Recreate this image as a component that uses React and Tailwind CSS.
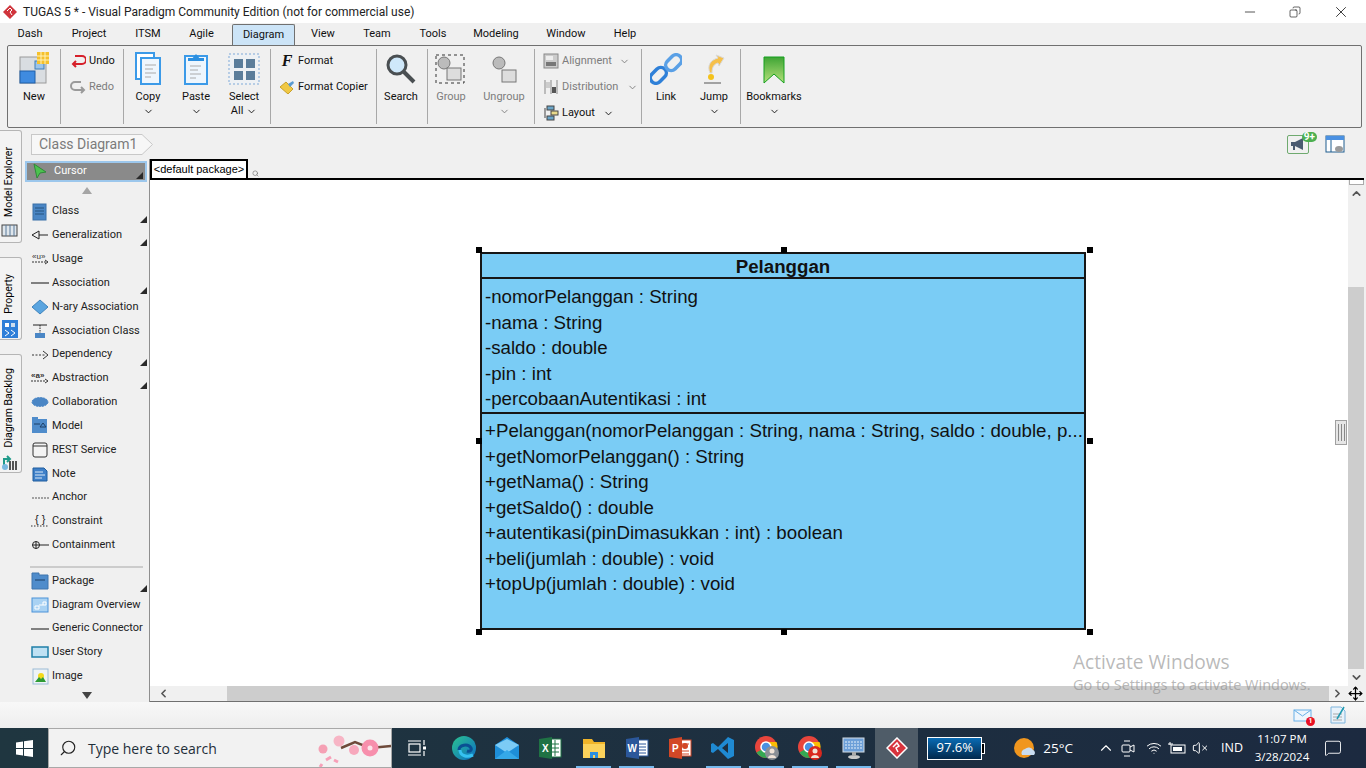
import React from "react";
import { ChevronDown, ChevronUp, ChevronLeft, ChevronRight, Move, Search, Minus, X, Copy, MessageSquare, Wifi, VolumeX } from "lucide-react";

const tabs = [
  ["Dash", "w-[46px]"],
  ["Project", "w-[72px]"],
  ["ITSM", "w-[46px]"],
  ["Agile", "w-[61px]"],
  ["Diagram", "w-[63px]"],
  ["View", "w-[56px]"],
  ["Team", "w-[52px]"],
  ["Tools", "w-[60px]"],
  ["Modeling", "w-[66px]"],
  ["Window", "w-[74px]"],
  ["Help", "w-[44px]"],
];

const paletteTop = [
  ["Class", true],
  ["Generalization", true],
  ["Usage", false],
  ["Association", true],
  ["N-ary Association", false],
  ["Association Class", false],
  ["Dependency", true],
  ["Abstraction", true],
  ["Collaboration", false],
  ["Model", false],
  ["REST Service", false],
  ["Note", false],
  ["Anchor", false],
  ["Constraint", false],
  ["Containment", false],
];

const paletteBottom = [
  ["Package", true],
  ["Diagram Overview", false],
  ["Generic Connector", false],
  ["User Story", false],
  ["Image", false],
];

const attributes = [
  "-nomorPelanggan : String",
  "-nama : String",
  "-saldo : double",
  "-pin : int",
  "-percobaanAutentikasi : int",
];

const operations = [
  "+Pelanggan(nomorPelanggan : String, nama : String, saldo : double, p...",
  "+getNomorPelanggan() : String",
  "+getNama() : String",
  "+getSaldo() : double",
  "+autentikasi(pinDimasukkan : int) : boolean",
  "+beli(jumlah : double) : void",
  "+topUp(jumlah : double) : void",
];

const Svg = ({ w = 20, h = 20, children }) => (
  <svg width={w} height={h} viewBox={`0 0 ${w} ${h}`} className="shrink-0">
    {children}
  </svg>
);

const PaletteIcon = ({ name }) => {
  switch (name) {
    case "Class":
      return (
        <Svg>
          <rect x="3" y="2" width="13" height="16" fill="#4a86c5" stroke="#3b70a8" />
          <path d="M5 6h9M5 9h9M5 12h9" stroke="#24527f" />
        </Svg>
      );
    case "Generalization":
      return (
        <Svg>
          <path d="M9 6l-7 4 7 4zM9 10h9" fill="none" stroke="#222" />
        </Svg>
      );
    case "Usage":
      return (
        <Svg>
          <text x="2" y="10" fontSize="8" fontFamily="Liberation Sans" fill="#333">«u»</text>
          <path d="M2 13h14" stroke="#333" strokeDasharray="2 1" />
          <path d="M15 11l3 2-3 2" fill="none" stroke="#333" />
        </Svg>
      );
    case "Association":
    case "Generic Connector":
      return (
        <Svg>
          <path d="M1 10h18" stroke="#808080" strokeWidth="2" />
        </Svg>
      );
    case "N-ary Association":
      return (
        <Svg>
          <path d="M10 3l8 7-8 7-8-7z" fill="#5aa5e0" stroke="#3f84bd" />
        </Svg>
      );
    case "Association Class":
      return (
        <Svg>
          <path d="M3 4h14" stroke="#222" />
          <path d="M10 4v8" stroke="#222" strokeDasharray="1.5 1" />
          <rect x="5" y="12" width="10" height="5" fill="#4a86c5" />
        </Svg>
      );
    case "Dependency":
      return (
        <Svg>
          <path d="M2 10h13" stroke="#333" strokeDasharray="2 1.5" />
          <path d="M13 6l5 4-5 4" fill="none" stroke="#333" />
        </Svg>
      );
    case "Abstraction":
      return (
        <Svg>
          <text x="1" y="10" fontSize="8" fontWeight="700" fontFamily="Liberation Sans" fill="#333">«a»</text>
          <path d="M1 13h15" stroke="#333" strokeDasharray="2 1" />
          <path d="M15 11l3 2-3 2" fill="none" stroke="#333" />
        </Svg>
      );
    case "Collaboration":
      return (
        <Svg>
          <ellipse cx="10" cy="10" rx="8" ry="4.5" fill="#4a86c5" stroke="#4a86c5" strokeDasharray="2 1" />
        </Svg>
      );
    case "Model":
      return (
        <Svg>
          <path d="M2 1h6v2h9v14H2z" fill="#4f8ccb" />
          <path d="M4 8h6" stroke="#1c3f66" />
          <path d="M13 7l-3 4h6z" fill="none" stroke="#1c3f66" />
        </Svg>
      );
    case "REST Service":
      return (
        <Svg>
          <rect x="3" y="3" width="14" height="14" rx="2" fill="#f4f4f4" stroke="#333" />
          <path d="M3 6h14" stroke="#333" />
        </Svg>
      );
    case "Note":
      return (
        <Svg>
          <path d="M3 4h11l3 3v10H3z" fill="#3f80c8" stroke="#1f5d9e" />
          <path d="M5 8h8M5 11h10M5 14h7" stroke="#dbe9f7" />
        </Svg>
      );
    case "Anchor":
      return (
        <Svg>
          <path d="M2 10h17" stroke="#555" strokeDasharray="2 1" />
        </Svg>
      );
    case "Constraint":
      return (
        <Svg>
          <text x="5" y="12" fontSize="11" fontFamily="Liberation Sans" fill="#222">{"{ }"}</text>
          <path d="M1 15h18" stroke="#333" strokeDasharray="1.5 1.5" />
        </Svg>
      );
    case "Containment":
      return (
        <Svg>
          <circle cx="6" cy="10" r="3.5" fill="none" stroke="#222" />
          <path d="M2.5 10H19M6 6.5v7" stroke="#222" />
        </Svg>
      );
    case "Package":
      return (
        <Svg>
          <path d="M2 2h7v2h9v14H2z" fill="#4f8ccb" stroke="#3f75ad" />
          <path d="M5 9h10" stroke="#1c3f66" />
        </Svg>
      );
    case "Diagram Overview":
      return (
        <Svg>
          <rect x="2" y="3" width="16" height="14" fill="#a9d2f3" stroke="#4a92d8" />
          <path d="M9 10h4V7h3v3h-3M5 11h4v3H5z" fill="none" stroke="#fff" />
        </Svg>
      );
    case "User Story":
      return (
        <Svg>
          <rect x="2" y="5" width="16" height="10" fill="#bfe1f3" stroke="#1f7fa8" strokeWidth="1.5" />
        </Svg>
      );
    case "Image":
      return (
        <Svg>
          <rect x="3" y="3" width="15" height="15" fill="#eef3f7" stroke="#9bbbd6" />
          <circle cx="11" cy="10" r="3" fill="#f2d81c" />
          <path d="M5 16l4-5 2 2 2-2 3 5z" fill="#2e9b34" />
        </Svg>
      );
    default:
      return <Svg />;
  }
};

const Corner = () => (
  <span className="absolute right-[2px] bottom-[1px] w-0 h-0 border-l-[7px] border-l-transparent border-b-[7px] border-b-[#2a2a2a]" />
);

const PaletteRow = ({ name, corner }) => (
  <div className="relative h-6 flex items-center pl-[5px] gap-[2px] text-[#222]">
    <PaletteIcon name={name} />
    <span className="whitespace-nowrap">{name}</span>
    {corner && <Corner />}
  </div>
);

const SideTab = ({ label, sizeClass, children }) => (
  <div className={`${sizeClass} w-[22px] pr-[2px] bg-[#f3f3f3] border border-l-0 border-[#b5b5b5] rounded-r-[3px] flex flex-col items-center justify-end gap-[6px]`}>
    <span className="[writing-mode:vertical-rl] rotate-180 text-[10.5px] leading-none text-black whitespace-nowrap">{label}</span>
    {children}
  </div>
);

const Separator = () => <div className="w-px h-[75px] bg-[#a8a8a8] shrink-0" />;

const BigButton = ({ width, label, disabled, caret, children }) => (
  <div className={`${width} self-start pt-[3px] shrink-0 flex flex-col items-center ${disabled ? "text-[#7d7d7d]" : "text-[#111]"}`}>
    <div className="h-[36px] flex items-end justify-center">{children}</div>
    <div className="mt-[5px] leading-[14px] text-center whitespace-nowrap">{label}</div>
    {caret && <ChevronDown size={11} className="mt-[2px]" />}
  </div>
);

const SmallRow = ({ icon, label, disabled, caret, caretClass }) => (
  <div className={`h-[26px] flex items-center gap-[3px] whitespace-nowrap ${disabled ? "text-[#7d7d7d]" : "text-[#111]"}`}>
    {icon}
    <span>{label}</span>
    {caret && <ChevronDown size={11} className={caretClass} />}
  </div>
);

const Ribbon = () => (
  <div className="ml-[7px] mr-[4px] h-[83px] border border-[#707070] rounded-[2px] flex items-center text-[11px]">
    <BigButton width="w-[52px]" label="New">
      <Svg w={32} h={34}>
        <rect x="2" y="6" width="26" height="26" fill="#d9dde1" stroke="#9a9a9a" />
        <rect x="2" y="20" width="15" height="12" fill="#3f8be0" stroke="#1f5fa8" />
        <rect x="17" y="10" width="9" height="8" fill="#9bc4ea" stroke="#3f7fb8" />
        <rect x="19" y="1" width="12" height="12" fill="#f5c02c" />
        <path d="M23 1v12M27 1v12M19 5h12M19 9h12" stroke="#fff2b8" />
      </Svg>
    </BigButton>
    <Separator />
    <div className="w-[62px] self-start mt-[2px] shrink-0 pl-[9px] flex flex-col">
      <SmallRow
        label="Undo"
        icon={
          <Svg w={16} h={14}>
            <path d="M5 2h7a3.5 3.5 0 0 1 0 8H3M6 7l-3 3 3 3" fill="none" stroke="#d6202a" strokeWidth="2" />
          </Svg>
        }
      />
      <SmallRow
        label="Redo"
        disabled
        icon={
          <Svg w={16} h={14}>
            <path d="M11 2H5a3.5 3.5 0 0 0 0 8h9M11 7l3 3-3 3" fill="none" stroke="#9a9a9a" strokeWidth="2" />
          </Svg>
        }
      />
    </div>
    <Separator />
    <BigButton width="w-[48px]" label="Copy" caret>
      <Svg w={28} h={34}>
        <rect x="2" y="2" width="18" height="26" fill="#fff" stroke="#3b9ae8" strokeWidth="2" />
        <rect x="7" y="7" width="19" height="26" fill="#eef6fd" stroke="#3b9ae8" strokeWidth="2" />
        <path d="M11 14h11M11 18h8M11 22h11M11 26h6" stroke="#aaa" />
      </Svg>
    </BigButton>
    <BigButton width="w-[48px]" label="Paste" caret>
      <Svg w={26} h={34}>
        <rect x="2" y="5" width="22" height="28" fill="#eef6fd" stroke="#3b9ae8" strokeWidth="2" />
        <path d="M8 9l5-6 5 6z" fill="#2b8fe0" />
        <rect x="5" y="7" width="16" height="3" fill="#2b8fe0" />
        <path d="M7 15h11M7 19h8M7 23h11M7 27h6" stroke="#aaa" />
      </Svg>
    </BigButton>
    <BigButton
      width="w-[48px]"
      label={
        <span>
          Select
          <br />
          All <ChevronDown size={11} className="inline" />
        </span>
      }
    >
      <Svg w={32} h={32}>
        <rect x="1" y="1" width="30" height="30" fill="#eef1f4" stroke="#7fa9d8" strokeDasharray="2 2" />
        <rect x="6" y="6" width="9" height="9" fill="#5b7d9a" />
        <rect x="18" y="6" width="9" height="9" fill="#5b7d9a" />
        <rect x="6" y="18" width="9" height="9" fill="#5b7d9a" />
        <rect x="18" y="18" width="9" height="9" fill="#5b7d9a" />
      </Svg>
    </BigButton>
    <div className="w-[2px] shrink-0" />
    <Separator />
    <div className="w-[105px] self-start mt-[2px] shrink-0 pl-[8px] flex flex-col">
      <SmallRow
        label="Format"
        icon={
          <span className="w-[16px] text-center font-['Liberation_Serif'] italic font-bold text-[16px] leading-none">F</span>
        }
      />
      <SmallRow
        label="Format Copier"
        icon={
          <Svg w={16} h={14}>
            <path d="M1 7l6-5 7 7-5 5z" fill="#f0c844" stroke="#c9a02a" />
            <path d="M9 4l5-3 1 2-4 4z" fill="#5a9ad0" />
          </Svg>
        }
      />
    </div>
    <Separator />
    <BigButton width="w-[48px]" label="Search">
      <Svg w={32} h={32}>
        <circle cx="12" cy="12" r="9" fill="#cfe8fa" stroke="#4a4f52" strokeWidth="3" />
        <path d="M19 19l10 10" stroke="#4a4f52" strokeWidth="4" />
      </Svg>
    </BigButton>
    <div className="w-[2px] shrink-0" />
    <Separator />
    <BigButton width="w-[46px]" label="Group" disabled>
      <Svg w={32} h={32}>
        <rect x="1" y="2" width="28" height="28" fill="none" stroke="#333" strokeDasharray="3 3" />
        <circle cx="9" cy="10" r="6" fill="#bbb" stroke="#777" />
        <rect x="12" y="15" width="14" height="12" fill="#ddd" stroke="#777" />
      </Svg>
    </BigButton>
    <BigButton width="w-[60px]" label="Ungroup" disabled caret>
      <Svg w={28} h={30}>
        <circle cx="9" cy="8" r="6" fill="#bbb" stroke="#777" />
        <rect x="12" y="15" width="14" height="12" fill="#ddd" stroke="#777" />
      </Svg>
    </BigButton>
    <Separator />
    <div className="w-[106px] self-start mt-[2px] shrink-0 pl-[8px] flex flex-col">
      <SmallRow
        label="Alignment"
        disabled
        caret
        caretClass="ml-[4px]"
        icon={
          <Svg w={16} h={16}>
            <rect x="1" y="1" width="14" height="14" fill="#ccc" stroke="#888" />
            <rect x="3" y="3" width="7" height="4" fill="#eee" />
            <rect x="3" y="9" width="10" height="4" fill="#777" />
          </Svg>
        }
      />
      <SmallRow
        label="Distribution"
        disabled
        caret
        caretClass="ml-[6px]"
        icon={
          <Svg w={16} h={16}>
            <path d="M2 1v14M8 1v14M14 1v14" stroke="#888" />
            <rect x="3" y="3" width="4" height="6" fill="#ccc" />
            <rect x="9" y="8" width="4" height="6" fill="#555" />
          </Svg>
        }
      />
      <SmallRow
        label="Layout"
        caret
        caretClass="ml-[5px]"
        icon={
          <Svg w={16} h={16}>
            <rect x="4" y="1" width="7" height="4" fill="#6aa5c8" stroke="#444" />
            <rect x="8" y="6" width="7" height="4" fill="#e8d98a" stroke="#444" />
            <rect x="4" y="11" width="7" height="4" fill="#6aa5c8" stroke="#444" />
            <path d="M2 3v10" stroke="#444" />
          </Svg>
        }
      />
    </div>
    <Separator />
    <BigButton width="w-[48px]" label="Link">
      <Svg w={32} h={32}>
        <rect x="-1" y="17" width="18" height="11" rx="5.5" transform="rotate(-45 8 22)" fill="none" stroke="#2f80d8" strokeWidth="3.5" />
        <rect x="15" y="4" width="18" height="11" rx="5.5" transform="rotate(-45 24 10)" fill="none" stroke="#5aa0e6" strokeWidth="3.5" />
      </Svg>
    </BigButton>
    <BigButton width="w-[48px]" label="Jump" caret>
      <Svg w={24} h={32}>
        <path d="M8 20c-3-7 0-13 8-15l-2-3 8 3-5 8-1-3c-4 1-6 4-6 10z" fill="#f6c04a" stroke="#d9d9d9" />
        <circle cx="9" cy="24" r="3" fill="#f4c21c" />
        <path d="M2 30h17" stroke="#888" strokeWidth="1.5" />
      </Svg>
    </BigButton>
    <div className="w-[2px] shrink-0" />
    <Separator />
    <BigButton width="w-[66px]" label="Bookmarks" caret>
      <Svg w={24} h={30}>
        <defs>
          <linearGradient id="bm" x1="0" y1="0" x2="0" y2="1">
            <stop offset="0" stopColor="#3fa535" />
            <stop offset="1" stopColor="#b5e07a" />
          </linearGradient>
        </defs>
        <path d="M2 2h20v26l-10-9-10 9z" fill="url(#bm)" stroke="#14a01e" />
      </Svg>
    </BigButton>
  </div>
);

const Palette = () => (
  <div className="w-[125px] shrink-0 border-r border-[#8f8f8f] pt-[2px] text-[11px] flex flex-col">
    <div className="relative h-[21px] mr-[2px] bg-[#8a8a8a] border-2 border-[#9cc7ec] flex items-center pl-[6px] gap-[7px] text-white">
      <Svg w={14} h={16}>
        <path d="M1 1l12 8-6 1-3 5z" fill="#4cc24f" stroke="#2f8a3a" />
      </Svg>
      <span>Cursor</span>
      <Corner />
    </div>
    <div className="h-[18px] flex items-center justify-center">
      <span className="w-0 h-0 border-x-[5px] border-x-transparent border-b-[7px] border-b-[#a5a5a5]" />
    </div>
    {paletteTop.map(([name, corner]) => (
      <PaletteRow key={name} name={name} corner={corner} />
    ))}
    <div className="h-[10px] flex items-center pl-[5px] pr-[6px] mt-[5px] mb-[-3px]">
      <div className="h-[2px] w-full bg-[#cccccc]" />
    </div>
    {paletteBottom.map(([name, corner]) => (
      <PaletteRow key={name} name={name} corner={corner} />
    ))}
    <div className="h-[14px] flex items-center justify-center">
      <span className="w-0 h-0 border-x-[5px] border-x-transparent border-t-[7px] border-t-[#444]" />
    </div>
  </div>
);

const Handle = ({ className }) => <span className={`absolute w-[6px] h-[6px] bg-black ${className}`} />;

const ClassBox = () => (
  <div className="absolute left-[330px] top-[72px] w-[606px] h-[378px] bg-[#7accf5] border-2 border-[#161616] font-['Liberation_Sans',sans-serif] text-[18.7px] text-[#111]">
    <div className="h-[25px] pt-[3px] border-b-2 border-[#161616] flex items-center justify-center font-bold leading-none">Pelanggan</div>
    <div className="h-[135px] border-b-2 border-[#161616] pl-[3px] pt-[5px]">
      {attributes.map((a) => (
        <div key={a} className="h-[25.5px] leading-[25.5px] whitespace-nowrap">{a}</div>
      ))}
    </div>
    <div className="pl-[3px] pt-[4px]">
      {operations.map((o) => (
        <div key={o} className="h-[25.5px] leading-[25.5px] whitespace-nowrap">{o}</div>
      ))}
    </div>
    <Handle className="-left-[6px] -top-[7px]" />
    <Handle className="left-[299px] -top-[7px]" />
    <Handle className="-right-[9px] -top-[7px]" />
    <Handle className="-left-[6px] top-[184px]" />
    <Handle className="-right-[9px] top-[184px]" />
    <Handle className="-left-[6px] -bottom-[7px]" />
    <Handle className="left-[299px] -bottom-[7px]" />
    <Handle className="-right-[9px] -bottom-[7px]" />
  </div>
);

const Canvas = () => (
  <div className="flex-1 min-w-0 mr-[2px] flex flex-col">
    <div className="h-[19px] flex items-end">
      <div className="h-[19px] w-[98px] bg-white border-2 border-b-0 border-black text-[11px] leading-[16px] text-center whitespace-nowrap font-['Liberation_Sans',sans-serif]">
        {"<default package>"}
      </div>
      <Search size={7} className="ml-[4px] mb-[1px] text-[#666]" />
    </div>
    <div className="flex-1 min-h-0 border-t-2 border-black flex flex-col">
      <div className="flex-1 min-h-0 flex">
        <div className="relative flex-1 bg-white">
          <ClassBox />
          <div className="absolute right-[1px] top-[240px] w-[12px] h-[25px] bg-[#e6e6e6] border border-[#a0a0a0] flex justify-center gap-[2px] py-[3px]">
            <span className="w-px bg-[#888]" />
            <span className="w-px bg-[#888]" />
            <span className="w-px bg-[#888]" />
          </div>
        </div>
        <div className="w-[16px] bg-[#f0f0f0] flex flex-col items-center">
          <div className="w-[15px] h-[5px] border-x border-b border-[#aaa] bg-white" />
          <ChevronUp size={13} strokeWidth={3} className="my-[2px] text-[#555]" />
          <div className="w-full h-[85px]" />
          <div className="w-full flex-1 bg-[#cdcdcd]" />
          <ChevronDown size={13} strokeWidth={3} className="my-[2px] text-[#555]" />
        </div>
      </div>
      <div className="h-[16px] bg-[#f0f0f0] flex items-center border-b border-[#707070]">
        <ChevronLeft size={13} strokeWidth={3} className="ml-[7px] text-[#555]" />
        <div className="ml-[57px] w-[1102px] h-full bg-[#cdcdcd]" />
        <ChevronRight size={13} strokeWidth={3} className="ml-[2px] text-[#555]" />
        <Move size={15} strokeWidth={2} className="ml-[4px] text-black" />
      </div>
    </div>
  </div>
);

const Watermark = () => (
  <div className="absolute left-[1073px] top-[649px] font-['Open_Sans',sans-serif] text-[#8a8a8a]/60 pointer-events-none">
    <div className="text-[19.1px] leading-[26px]">Activate Windows</div>
    <div className="text-[14.5px] leading-[20px]">Go to Settings to activate Windows.</div>
  </div>
);

const AppIcon = ({ active, underline, children }) => (
  <div className={`relative w-[43.3px] h-full flex items-center justify-center ${active ? "bg-[#4f5c68]" : ""}`}>
    {children}
    {underline && <span className="absolute bottom-0 left-[4px] right-[4px] h-[2px] bg-[#76b9ed]" />}
  </div>
);

const Chrome = ({ badge }) => (
  <Svg w={26} h={26}>
    <circle cx="12" cy="12" r="11" fill="#e8453c" />
    <path d="M12 12L2.5 17.5A11 11 0 0 0 15 22.5z" fill="#34a853" />
    <path d="M12 12l3 10.5A11 11 0 0 0 22.5 7H12z" fill="#fbbc05" />
    <circle cx="12" cy="12" r="5" fill="#4a90e2" stroke="#fff" strokeWidth="1.5" />
    <circle cx="18" cy="18" r="7" fill={badge} />
    <circle cx="18" cy="16" r="2.5" fill="#f1e3d8" />
    <path d="M14 23c0-4 8-4 8 0z" fill="#f1e3d8" />
  </Svg>
);

const Taskbar = () => (
  <div className="h-10 bg-gradient-to-r from-[#1f3640] to-[#1c2a40] flex items-center text-white font-['Open_Sans',sans-serif] shrink-0">
    <div className="w-[48px] h-full flex items-center justify-center">
      <Svg w={17} h={17}>
        <path d="M0 2.5l7-1v6.5H0zM8 1.3L17 0v8H8zM0 9h7v6.5l-7-1zM8 9h9v8l-9-1.3z" fill="#fff" />
      </Svg>
    </div>
    <div className="relative w-[344px] h-full bg-[#f2f2f2] border border-[#a8a8a8] flex items-center pl-[10px] gap-[11px] text-[#1f2f3a] text-[14px]">
      <Search size={18} strokeWidth={1.5} className="-scale-x-100 text-[#222]" />
      <span className="mt-[1px]">Type here to search</span>
      <div className="absolute right-0 top-[6px]">
        <Svg w={76} h={32}>
          <path d="M76 11L55 13 40 7l-14 6" stroke="#6e4a3a" strokeWidth="2.5" fill="none" />
          <circle cx="55" cy="13" r="8.5" fill="#f78fac" />
          <circle cx="55" cy="13" r="2.5" fill="#fde4ea" />
          <circle cx="39" cy="15" r="5" fill="#f7a8bc" />
          <circle cx="24" cy="6" r="5.5" fill="#f7b5c5" />
          <circle cx="8" cy="14" r="4.5" fill="#f5a0b4" />
          <path d="M11 25l5-3M19 25l4 2M5 32l2-3" stroke="#f7a0b8" strokeWidth="3" />
        </Svg>
      </div>
    </div>
    <div className="w-[50px] h-full flex items-center justify-center">
      <Svg w={18} h={16}>
        <rect x="1" y="4" width="11" height="8" fill="none" stroke="#fff" strokeWidth="1.2" />
        <path d="M0 1h13M0 15h13M16 0v5M16 11v5" stroke="#fff" strokeWidth="1.2" />
        <rect x="15" y="6.5" width="3" height="3" fill="#fff" />
      </Svg>
    </div>
    <div className="h-full flex">
      <AppIcon>
        <Svg w={26} h={26}>
          <defs>
            <linearGradient id="edge" x1="0" y1="0" x2="1" y2="1">
              <stop offset="0" stopColor="#2bc38f" />
              <stop offset="1" stopColor="#0d6cc4" />
            </linearGradient>
          </defs>
          <circle cx="13" cy="13" r="12" fill="url(#edge)" />
          <path d="M8 15c0-5 9-7 12-2 1 2-1 4-4 3" fill="none" stroke="#0a4f93" strokeWidth="3" />
          <path d="M9 15c0 5 6 8 13 5" fill="none" stroke="#35c1f1" strokeWidth="3" />
        </Svg>
      </AppIcon>
      <AppIcon>
        <Svg w={26} h={24}>
          <path d="M1 9L13 1l12 8v14H1z" fill="#1e8ed8" />
          <path d="M1 9l12 8 12-8L13 3z" fill="#7ccbf5" />
          <path d="M1 23l12-9 12 9z" fill="#35a8e8" />
        </Svg>
      </AppIcon>
      <AppIcon>
        <Svg w={24} h={24}>
          <rect x="11" y="3" width="12" height="18" fill="#fff" stroke="#1f7244" />
          <path d="M13 8h8M13 12h8M13 16h8M17 4v16" stroke="#1f7244" />
          <path d="M1 3l13-2v22L1 21z" fill="#1f7244" />
          <text x="4" y="16" fontSize="10" fontWeight="700" fontFamily="Liberation Sans" fill="#fff">X</text>
        </Svg>
      </AppIcon>
      <AppIcon underline>
        <Svg w={24} h={22}>
          <path d="M1 2h9l2 3h11v16H1z" fill="#f0b429" />
          <path d="M1 7h22v14H1z" fill="#fbd25b" />
          <path d="M8 21v-6h8v6h-3v-3h-2v3z" fill="#2b8fe0" />
        </Svg>
      </AppIcon>
      <AppIcon underline>
        <Svg w={24} h={24}>
          <rect x="10" y="4" width="13" height="16" fill="#fff" stroke="#2b579a" />
          <path d="M12 8h9M12 11h9M12 14h9M12 17h9" stroke="#2b579a" />
          <path d="M1 3l13-2v22L1 21z" fill="#2b579a" />
          <text x="2.5" y="16" fontSize="10" fontWeight="700" fontFamily="Liberation Sans" fill="#fff">W</text>
        </Svg>
      </AppIcon>
      <AppIcon>
        <Svg w={24} h={24}>
          <rect x="10" y="4" width="13" height="16" fill="#fff" stroke="#d24726" />
          <path d="M14 8h7M14 15h7M14 18h7" stroke="#d24726" />
          <circle cx="17" cy="10" r="3" fill="#d24726" />
          <path d="M1 3l13-2v22L1 21z" fill="#d24726" />
          <text x="4" y="16" fontSize="10" fontWeight="700" fontFamily="Liberation Sans" fill="#fff">P</text>
        </Svg>
      </AppIcon>
      <AppIcon underline>
        <Svg w={24} h={24}>
          <path d="M17 1l6 3v16l-6 3-10-10-5 4-2-1V8l2-1 5 4zM17 7l-6 5 6 5z" fill="#1f8ad2" fillRule="evenodd" />
        </Svg>
      </AppIcon>
      <AppIcon underline>
        <Chrome badge="#8a8f96" />
      </AppIcon>
      <AppIcon underline>
        <Chrome badge="#d9281e" />
      </AppIcon>
      <AppIcon underline>
        <Svg w={24} h={24}>
          <rect x="2" y="2" width="21" height="14" fill="#6d9fd8" stroke="#d5dde5" />
          <path d="M4 6h17M4 9h17M4 12h17" stroke="#e6f0fa" strokeDasharray="2 1" />
          <ellipse cx="13" cy="21" rx="6" ry="2" fill="#c9c9c9" />
          <rect x="11" y="16" width="4" height="4" fill="#aaa" />
        </Svg>
      </AppIcon>
      <AppIcon active>
        <Svg w={22} h={22}>
          <path d="M11 1l10 10-10 10L1 11z" fill="#d8343d" stroke="#fff" strokeWidth="1.5" />
          <path d="M7 10l4-4 2 3-3 2 2 4" fill="none" stroke="#fff" strokeWidth="1.5" />
        </Svg>
      </AppIcon>
    </div>
    <div className="ml-[9px] relative w-[55px] h-[23px] border border-white bg-gradient-to-b from-[#0a6cb5] to-[#02294d] flex items-center justify-center text-[13px]">
      97.6%
      <span className="absolute -right-[4px] top-[5px] w-[3px] h-[11px] bg-black border border-white border-l-0" />
    </div>
    <div className="ml-[32px]">
      <Svg w={24} h={22}>
        <circle cx="10" cy="11" r="10" fill="#f0961e" />
        <path d="M8 18a4 4 0 0 1 3-6 5 5 0 0 1 8 1 3 3 0 0 1 1 5z" fill="#c9dcf0" />
      </Svg>
    </div>
    <span className="ml-[5px] text-[13.5px]">25°C</span>
    <ChevronUp size={18} strokeWidth={1.5} className="ml-[24px]" />
    <div className="ml-[6px]">
      <Svg w={14} h={18}>
        <rect x="1" y="6" width="8" height="7" rx="1" fill="none" stroke="#fff" />
        <path d="M9 8l4-2v7l-4-2M3 2h6M3 17h6" fill="none" stroke="#fff" />
      </Svg>
    </div>
    <Wifi size={16} strokeWidth={1.5} className="ml-[11px]" />
    <div className="ml-[6px]">
      <Svg w={18} h={12}>
        <rect x="3" y="3" width="14" height="8" fill="none" stroke="#fff" />
        <rect x="5" y="5" width="9" height="4" fill="#fff" />
        <path d="M0 2h5M2 0v3" stroke="#fff" />
      </Svg>
    </div>
    <VolumeX size={16} strokeWidth={1.5} className="ml-[6px]" />
    <span className="ml-[13px] text-[12.5px]">IND</span>
    <div className="ml-[9px] w-[60px] text-center text-[11.5px] leading-[18px]">
      <div>11:07 PM</div>
      <div>3/28/2024</div>
    </div>
    <MessageSquare size={18} strokeWidth={1.2} className="ml-[12px]" />
  </div>
);

const App = () => {
  return (
    <div className="relative w-[1366px] h-[768px] overflow-hidden bg-[#f0f0f0] flex flex-col font-['Roboto',sans-serif]">
      <div className="h-[23px] bg-white flex items-center shrink-0">
        <div className="ml-[3px] mr-[6px]">
          <Svg w={14} h={14}>
            <path d="M7 0l7 7-7 7-7-7z" fill="#d0343c" />
            <path d="M4 6l3-3 2 2-2 2 2 3" fill="none" stroke="#fff" />
          </Svg>
        </div>
        <span className="text-[12px] text-[#222]">TUGAS 5 * - Visual Paradigm Community Edition (not for commercial use)</span>
        <div className="ml-auto flex items-center">
          <Minus size={16} strokeWidth={1} className="mr-[31px] text-black" />
          <Copy size={12} strokeWidth={1.2} className="mr-[31px] -scale-x-100 text-black" />
          <X size={18} strokeWidth={1} className="mr-[16px] text-black" />
        </div>
      </div>
      <div className="h-[22px] pl-[7px] flex items-end shrink-0 text-[11px] text-[#111]">
        {tabs.map(([label, width]) =>
          label === "Diagram" ? (
            <div key={label} className={`${width} h-[22px] -mb-px bg-[#cce4f7] border border-b-0 border-[#707070] rounded-t-[2px] flex items-center justify-center`}>
              {label}
            </div>
          ) : (
            <div key={label} className={`${width} h-[22px] flex items-center justify-center`}>
              {label}
            </div>
          )
        )}
      </div>
      <Ribbon />
      <div className="flex-1 min-h-0 flex flex-col mt-px">
        <div className="h-[30px] pl-[31px] pr-[21px] flex items-center shrink-0">
          <div className="relative h-[21px] w-[111px] bg-[#f7f7f7] border border-[#c8c8c8] border-r-0 flex items-center pl-[7px] text-[14px] text-[#7b7b7b] whitespace-nowrap">
            Class Diagram1
            <svg width="11" height="21" viewBox="0 0 11 21" className="absolute -right-[11px] -top-px">
              <path d="M0 .5L10.5 10.5 0 20.5" fill="#f7f7f7" stroke="#c8c8c8" />
            </svg>
          </div>
          <div className="ml-auto flex items-center gap-[16px]">
            <div className="relative w-[22px] h-[19px] border border-[#6faa6f] rounded-[2px] flex items-center justify-center">
              <Svg w={16} h={14}>
                <path d="M1 5h4l8-4v12L5 9v4H3V9H1z" fill="#4a5a70" />
              </Svg>
              <span className="absolute -right-[9px] -top-[4px] h-[10px] px-[2px] rounded-full bg-[#4caf50] text-white text-[10px] leading-[10px] font-bold">9+</span>
            </div>
            <Svg w={20} h={19}>
              <rect x="1" y="1" width="18" height="16" fill="#fff" stroke="#1f5d8e" />
              <rect x="1" y="1" width="18" height="4" fill="#4a90e2" />
              <path d="M6 5v12" stroke="#1f5d8e" />
              <ellipse cx="14" cy="14" rx="4" ry="3" fill="#9a9a9a" />
            </Svg>
          </div>
        </div>
        <div className="flex-1 min-h-0 flex">
          <div className="w-[25px] shrink-0 -mt-[29px] flex flex-col gap-[14px] relative">
            <SideTab label="Model Explorer" sizeClass="h-[113px] pb-[4px]">
              <Svg w={17} h={15}>
                <rect x="1" y="2" width="15" height="11" fill="#dfe6ec" stroke="#444" />
                <path d="M5 2v11M9 2v11M13 2v11" stroke="#5a7a9a" />
              </Svg>
            </SideTab>
            <SideTab label="Property" sizeClass="h-[83px] pb-[1px]">
              <Svg w={16} h={18}>
                <rect x="0" y="0" width="16" height="18" fill="#2f7fd8" />
                <rect x="3" y="3" width="4" height="4" fill="#fff" />
                <rect x="9" y="3" width="4" height="4" fill="#cde" />
                <path d="M3 10l4 3-4 3M9 10l4 3-4 3" fill="none" stroke="#fff" />
              </Svg>
            </SideTab>
            <SideTab label="Diagram Backlog" sizeClass="h-[119px] pb-[1px]">
              <Svg w={18} h={18}>
                <path d="M3 12V6h5M6 3l3 3-3 3" fill="none" stroke="#1f9a8a" strokeWidth="2" />
                <circle cx="4" cy="14" r="3" fill="#7ab8e0" />
                <path d="M9 8v9M12 8v9M15 8v9" stroke="#555" strokeWidth="2" />
              </Svg>
            </SideTab>
          </div>
          <Palette />
          <Canvas />
        </div>
        <div className="h-[26px] shrink-0 bg-gradient-to-b from-[#f8f8f8] to-[#eeeeee] flex items-center justify-end pr-[20px] gap-[18px]">
          <div className="relative">
            <Svg w={19} h={13}>
              <rect x="1" y="1" width="17" height="11" fill="#eef6fd" stroke="#68b0e8" />
              <path d="M1 1l8.5 6L18 1" fill="none" stroke="#68b0e8" />
            </Svg>
            <span className="absolute -right-[3px] -bottom-[4px] w-[9px] h-[9px] rounded-full bg-[#e81123] text-white text-[7px] leading-[9px] text-center font-bold">1</span>
          </div>
          <Svg w={16} h={18}>
            <path d="M1 1h10l4 4v12H1z" fill="#e8f2fa" stroke="#7fb5dd" />
            <path d="M3 8h9M3 11h9M3 14h9" stroke="#a8a8a8" />
            <path d="M7 13l7-12" stroke="#1f9ab0" strokeWidth="1.5" />
          </Svg>
        </div>
      </div>
      <Taskbar />
      <Watermark />
    </div>
  );
};

export default App;
